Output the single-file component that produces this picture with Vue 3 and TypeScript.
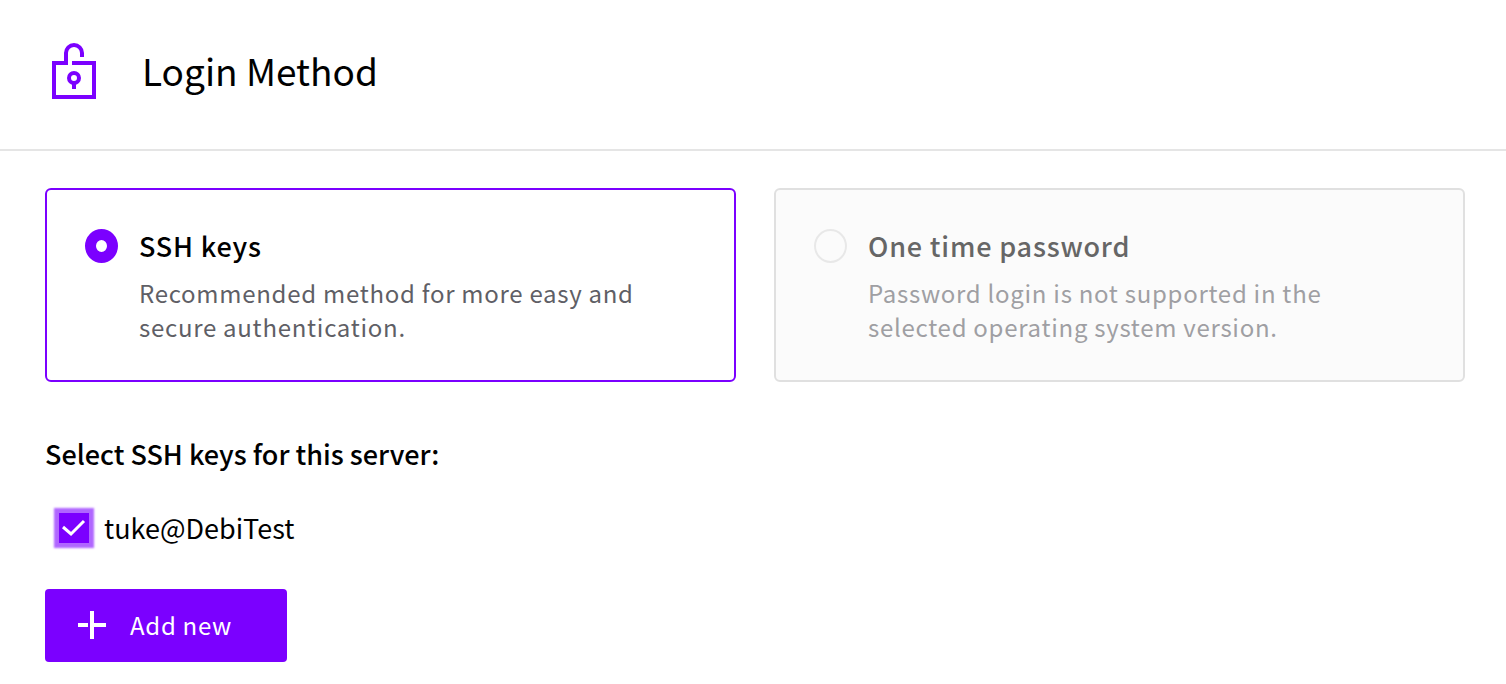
<script setup lang="ts">
import { ref } from 'vue'

interface LoginMethod {
  id: string
  title: string
  description: string
  disabled: boolean
}

interface SshKey {
  id: string
  name: string
}

const methods: LoginMethod[] = [
  {
    id: 'ssh',
    title: 'SSH keys',
    description: 'Recommended method for more easy and secure authentication.',
    disabled: false,
  },
  {
    id: 'password',
    title: 'One time password',
    description: 'Password login is not supported in the selected operating system version.',
    disabled: true,
  },
]

const keys: SshKey[] = [{ id: 'tuke', name: 'tuke@DebiTest' }]

const method = ref('ssh')
const selectedKeys = ref<string[]>(['tuke'])
</script>

<template>
  <section class="panel">
    <header class="header">
      <svg class="lock" viewBox="0 0 44 56" aria-hidden="true">
        <path d="M20 20H42V54H2V20H14V10a8 8 0 0 1 16 0v4" />
        <circle cx="22" cy="35" r="5" />
        <path d="M22 40v6" />
      </svg>
      <h1 class="title">Login Method</h1>
    </header>

    <div class="body">
      <div class="methods" role="radiogroup" aria-label="Login Method">
        <label
          v-for="m in methods"
          :key="m.id"
          class="card"
          :class="{ selected: method === m.id, disabled: m.disabled }"
        >
          <input
            v-model="method"
            class="radio"
            type="radio"
            name="login-method"
            :value="m.id"
            :disabled="m.disabled"
          />
          <span class="card-text">
            <span class="card-title">{{ m.title }}</span>
            <span class="card-description">{{ m.description }}</span>
          </span>
        </label>
      </div>

      <h2 class="subtitle">Select SSH keys for this server:</h2>

      <ul class="keys">
        <li v-for="k in keys" :key="k.id" class="key-row">
          <label class="key">
            <span class="check">
              <input v-model="selectedKeys" class="check-input" type="checkbox" :value="k.id" />
              <svg class="check-mark" viewBox="0 0 30 30" aria-hidden="true">
                <path d="M4 14l8 7L25 8" />
              </svg>
            </span>
            <span>{{ k.name }}</span>
          </label>
        </li>
      </ul>

      <button class="add" type="button">
        <svg class="plus" viewBox="0 0 28 28" aria-hidden="true">
          <path d="M0 12h10v4H0zM12 0h4v12h12v4H16v12h-4z" />
        </svg>
        Add new
      </button>
    </div>
  </section>
</template>

<style>
body {
  margin: 0;
  background: #fff;
}
</style>

<style scoped>
.panel {
  color: #000;
  font-family: "Source Sans Pro", "Noto Sans CJK SC", "Noto Sans", sans-serif;
  font-size: 27px;
  line-height: 34px;
}

.header {
  display: flex;
  align-items: flex-start;
  gap: 46px;
  padding: 43px 52px 50px;
  border-bottom: 2px solid #e5e5e5;
}

.lock {
  width: 44px;
  height: 56px;
  fill: none;
  stroke: #7b00ff;
  stroke-width: 4;
}

.title {
  margin: 0;
  font-size: 37px;
  font-weight: 400;
  line-height: 54px;
}

.body {
  padding: 37px 41px 22px 45px;
}

.methods {
  display: grid;
  grid-template-columns: 1fr 1fr;
  gap: 38px;
}

.card {
  display: flex;
  align-items: flex-start;
  gap: 21px;
  padding: 39px 38px 36px;
  border: 2px solid #e0e0e0;
  border-radius: 6px;
}

.card.selected {
  border-color: #7b00ff;
}

.card.disabled {
  background: #fbfbfb;
}

.radio {
  flex: none;
  appearance: none;
  box-sizing: border-box;
  width: 33px;
  height: 34px;
  margin: 0;
  border: 2px solid #e8e8e8;
  border-radius: 50%;
}

.radio:checked {
  border: 11px solid #7b00ff;
  background: #fff;
}

.card-text {
  display: flex;
  flex-direction: column;
  gap: 13px;
}

.card-title {
  font-weight: 500;
  letter-spacing: 0.03em;
}

.card-description {
  max-width: 520px;
  color: #5f5f66;
  font-size: 24px;
  letter-spacing: 0.03em;
}

.disabled .card-title {
  color: #666;
}

.disabled .card-description {
  color: #9f9fa3;
}

.subtitle {
  margin: 55px 0 39px;
  font-size: 27px;
  font-weight: 500;
}

.keys {
  margin: 0 0 43px;
  padding: 0 14px;
  list-style: none;
}

.key-row {
  display: flex;
}

.key {
  display: flex;
  align-items: flex-start;
  gap: 15px;
  line-height: 36px;
}

.check {
  display: grid;
  padding-top: 3px;
}

.check-input,
.check-mark {
  grid-area: 1 / 1;
  width: 30px;
  height: 30px;
  margin: 0;
}

.check-input {
  appearance: none;
  box-sizing: border-box;
  border: 2px solid #7b00ff;
  background: #fff;
}

.check-input:checked {
  background: #7b00ff;
  box-shadow: 0 0 2px 5px #b066ff;
}

.check-mark {
  z-index: 1;
  fill: none;
  stroke: #fff;
  stroke-width: 3;
  pointer-events: none;
}

.add {
  display: inline-flex;
  align-items: center;
  gap: 24px;
  padding: 19px 55px 20px 33px;
  border: 0;
  border-radius: 4px;
  background: #7b00ff;
  color: #fff;
  font: inherit;
  font-size: 24px;
  letter-spacing: 0.03em;
}

.plus {
  width: 28px;
  height: 28px;
  fill: #fff;
}
</style>
